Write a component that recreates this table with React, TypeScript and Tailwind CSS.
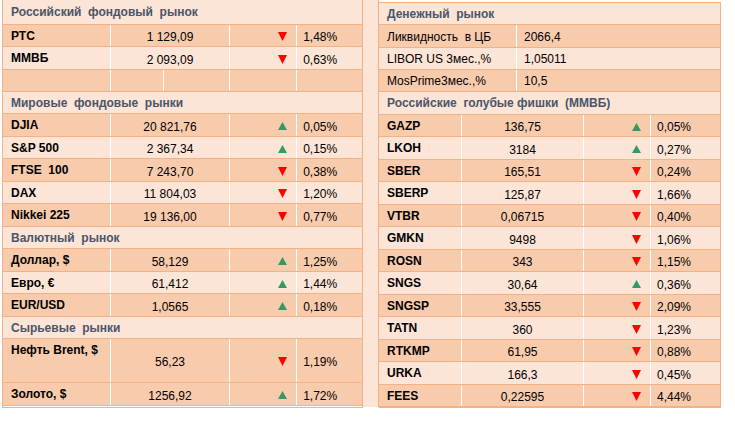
import React from "react";

type Dir = "up" | "down";
type Row = { name: string; value: string; dir: Dir; pct: string; dark: boolean; h: string };

const Tri = ({ dir }: { dir: Dir }) =>
  dir === "up" ? (
    <svg width="9" height="8" viewBox="0 0 9 8">
      <polygon points="4.5,0 9,8 0,8" fill="#339966" />
    </svg>
  ) : (
    <svg width="9" height="9" viewBox="0 0 9 9">
      <polygon points="0,0 9,0 4.5,9" fill="#ff0000" />
    </svg>
  );

const Section = ({ title, h = "h-[22px]" }: { title: string; h?: string }) => (
  <div className={`${h} bg-[#fce4d6] border-b border-[#f4b183] flex items-center pl-[8px] whitespace-pre text-[12px] font-bold text-[#4a5568]`}>
    {title}
  </div>
);

const StockRow = ({ r, w }: { r: Row; w: [string, string, string, string] }) => (
  <div className={`${r.h} ${r.dark ? "bg-[#f8cbad]" : "bg-[#fce4d6]"} border-b border-[#f4b183] flex text-[12px] text-black`}>
    <div className={`${w[0]} pl-[8px] pt-[2px] font-bold whitespace-pre`}>{r.name}</div>
    <div className={`${w[1]} border-l border-white flex items-center justify-center pt-[3px]`}>{r.value}</div>
    <div className={`${w[2]} border-l border-white flex items-center justify-end pr-[9px] pt-[2px]`}>
      <Tri dir={r.dir} />
    </div>
    <div className={`${w[3]} border-l border-white flex items-center pl-[6px] pt-[3px]`}>{r.pct}</div>
  </div>
);

const leftW: [string, string, string, string] = ["w-[107px]", "w-[120px]", "w-[67px]", "w-[66px]"];
const rightW: [string, string, string, string] = ["w-[82px]", "w-[122px]", "w-[67px]", "w-[70px]"];

const r = (name: string, value: string, dir: Dir, pct: string, dark: boolean, h = "h-[22px]"): Row => ({
  name, value, dir, pct, dark, h,
});

const world = [
  r("DJIA", "20 821,76", "up", "0,05%", true, "h-[23px]"),
  r("S&P 500", "2 367,34", "up", "0,15%", false),
  r("FTSE  100", "7 243,70", "down", "0,38%", true, "h-[23px]"),
  r("DAX", "11 804,03", "down", "1,20%", false),
  r("Nikkei 225", "19 136,00", "down", "0,77%", true, "h-[23px]"),
];

const fx = [
  r("Доллар, $", "58,129", "up", "1,25%", true, "h-[23px]"),
  r("Евро, €", "61,412", "up", "1,44%", false),
  r("EUR/USD", "1,0565", "up", "0,18%", true, "h-[23px]"),
];

const blue = [
  r("GAZP", "136,75", "up", "0,05%", true),
  r("LKOH", "3184", "up", "0,27%", false, "h-[23px]"),
  r("SBER", "165,51", "down", "0,24%", true),
  r("SBERP", "125,87", "down", "1,66%", false, "h-[23px]"),
  r("VTBR", "0,06715", "down", "0,40%", true),
  r("GMKN", "9498", "down", "1,06%", false, "h-[23px]"),
  r("ROSN", "343", "down", "1,15%", true),
  r("SNGS", "30,64", "up", "0,36%", false, "h-[23px]"),
  r("SNGSP", "33,555", "down", "2,09%", true),
  r("TATN", "360", "down", "1,23%", false, "h-[23px]"),
  r("RTKMP", "61,95", "down", "0,88%", true),
  r("URKA", "166,3", "down", "0,45%", false, "h-[23px]"),
  r("FEES", "0,22595", "down", "4,44%", true),
];

const money = [
  { name: "Ликвидность  в ЦБ", value: "2066,4", dark: true, h: "h-[23px]" },
  { name: "LIBOR US 3мес.,%", value: "1,05011", dark: false, h: "h-[22px]" },
  { name: "MosPrime3мес.,%", value: "10,5", dark: true, h: "h-[22px]" },
];

export default function App() {
  return (
    <div className="w-[735px] h-[423px] bg-white" style={{ fontFamily: '"Liberation Sans", Arial, sans-serif' }}>
      <div className="flex pl-[2px]">
        {/* left */}
        <div className="w-[361px] border-l border-r border-b border-[#f4b183] flex flex-col">
          <Section title="Российский  фондовый  рынок" h="h-[25px]" />
          <StockRow r={r("РТС", "1 129,09", "down", "1,48%", true)} w={leftW} />
          <StockRow r={r("ММВБ", "2 093,09", "down", "0,63%", false, "h-[23px]")} w={leftW} />
          <div className="h-[22px] bg-[#f8cbad] border-b border-[#f4b183] flex">
            <div className="w-[107px]" />
            <div className="w-[53px] border-l border-white" />
            <div className="w-[67px] border-l border-white" />
            <div className="w-[67px] border-l border-white" />
            <div className="w-[66px] border-l border-white" />
          </div>
          <Section title="Мировые  фондовые  рынки" />
          {world.map((x) => (
            <StockRow key={x.name} r={x} w={leftW} />
          ))}
          <Section title="Валютный  рынок" />
          {fx.map((x) => (
            <StockRow key={x.name} r={x} w={leftW} />
          ))}
          <Section title="Сырьевые  рынки" />
          <StockRow r={r("Нефть Brent, $", "56,23", "down", "1,19%", true, "h-[44px]")} w={leftW} />
          <StockRow r={r("Золото, $", "1256,92", "up", "1,72%", true, "h-[23px]")} w={leftW} />
        </div>
        {/* spacer */}
        <div className="w-[16px] h-[407px] bg-[#fce4d6] border-r border-[#f4b183]" />
        {/* right */}
        <div className="w-[342px] mt-[2px] border-t border-r border-b border-[#f4b183] flex flex-col self-start">
          <Section title="Денежный  рынок" />
          {money.map((m) => (
            <div key={m.name} className={`${m.h} ${m.dark ? "bg-[#f8cbad]" : "bg-[#fce4d6]"} border-b border-[#f4b183] flex text-[12px] text-black`}>
              <div className="w-[137px] pl-[8px] flex items-center pt-[1px] whitespace-pre">{m.name}</div>
              <div className="flex-1 border-l border-white pl-[7px] flex items-center pt-[1px]">{m.value}</div>
            </div>
          ))}
          <Section title="Российские  голубые фишки  (ММВБ)" h="h-[23px]" />
          {blue.map((x) => (
            <StockRow key={x.name} r={x} w={rightW} />
          ))}
        </div>
      </div>
    </div>
  );
}
